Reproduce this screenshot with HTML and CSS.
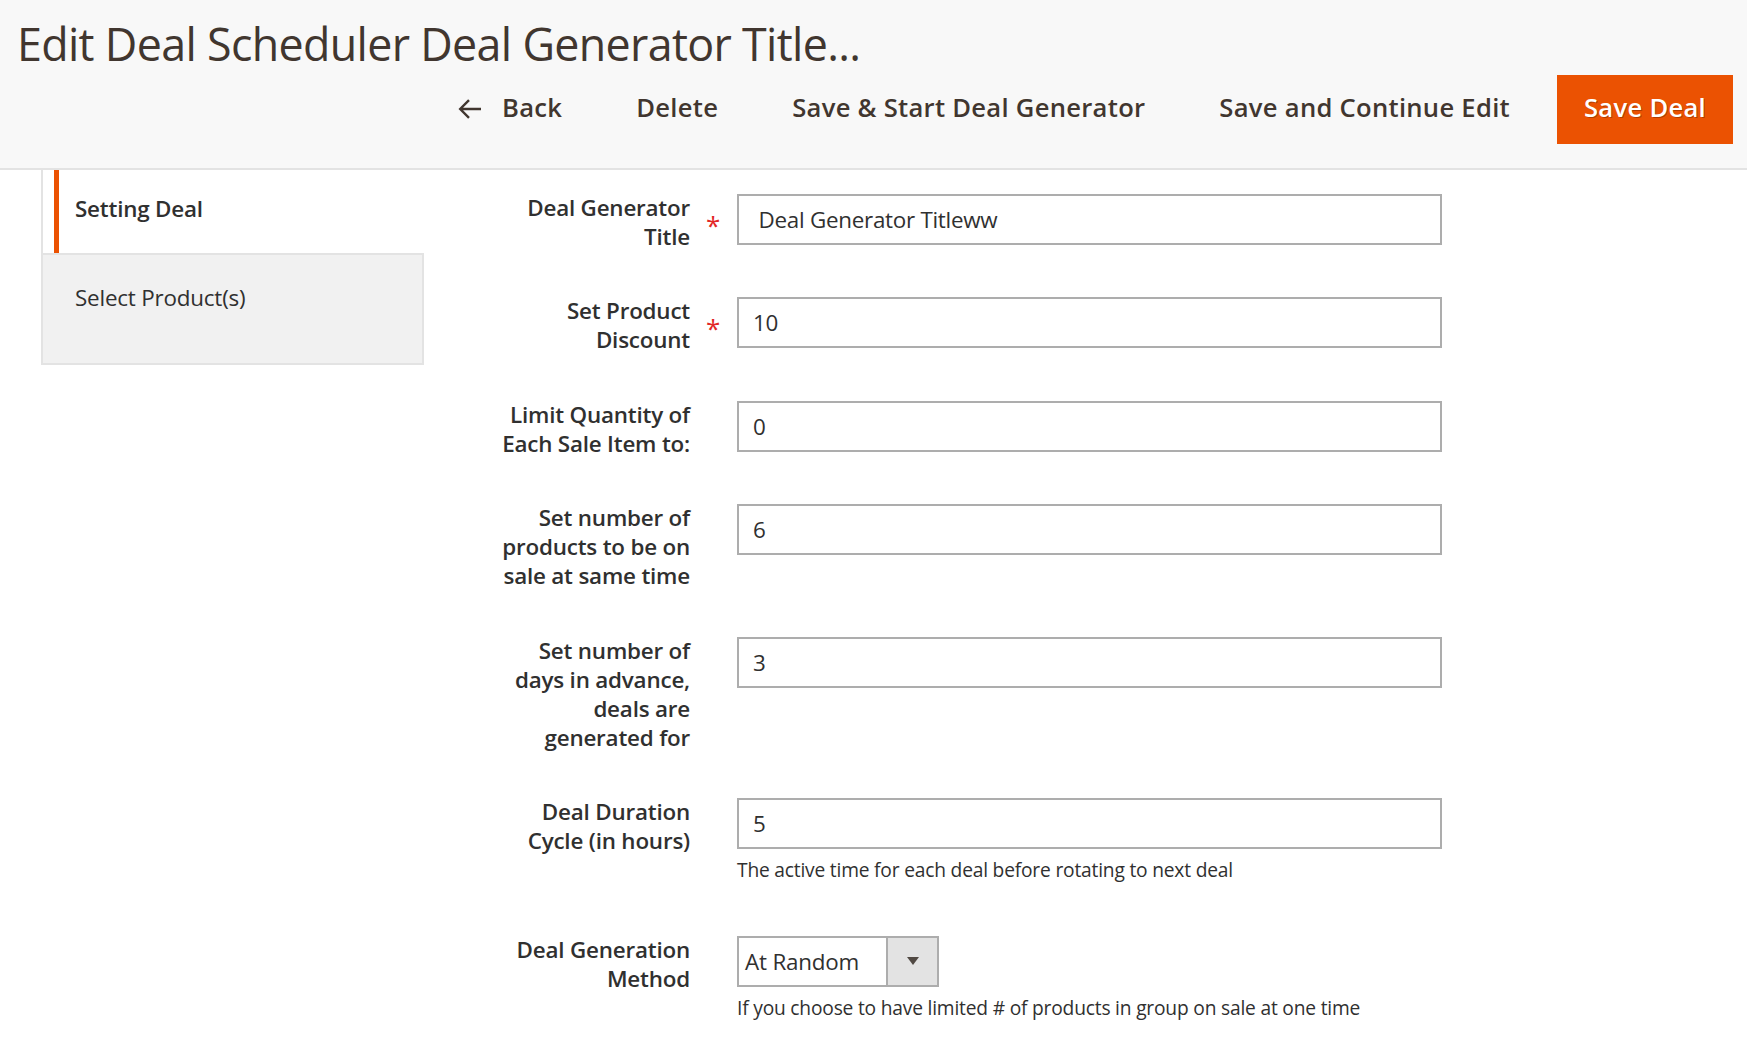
FILE: index.html
```html
<!DOCTYPE html>
<html lang="en">
<head>
<meta charset="utf-8">
<title>Edit Deal Scheduler Deal Generator</title>
<link rel="stylesheet" href="styles.css">
</head>
<body>
<header class="page-header">
  <h1 class="page-title">Edit Deal Scheduler Deal Generator Title...</h1>
  <div class="page-actions">
    <button class="action action-back" type="button">
      <svg class="back-icon" width="24" height="20" viewBox="0 0 24 20" aria-hidden="true"><path d="M23 10H2.5M11 1.2L2.2 10L11 18.8" fill="none" stroke="#41362f" stroke-width="2.4"/></svg>
      <span>Back</span>
    </button>
    <button class="action" type="button">Delete</button>
    <button class="action" type="button">Save &amp; Start Deal Generator</button>
    <button class="action" type="button">Save and Continue Edit</button>
    <button class="action action-primary" type="button">Save Deal</button>
  </div>
</header>

<main class="page-main">
  <nav class="tabs">
    <div class="tab tab-active">Setting Deal</div>
    <div class="tab tab-idle">Select Product(s)</div>
  </nav>

  <form class="form">
    <div class="field">
      <label class="field-label">Deal Generator Title</label>
      <span class="req">*</span>
      <div class="control"><input class="input" type="text" value=" Deal Generator Titleww"></div>
    </div>
    <div class="field">
      <label class="field-label">Set Product Discount</label>
      <span class="req">*</span>
      <div class="control"><input class="input" type="text" value="10"></div>
    </div>
    <div class="field">
      <label class="field-label">Limit Quantity of Each Sale Item to:</label>
      <span class="req"></span>
      <div class="control"><input class="input" type="text" value="0"></div>
    </div>
    <div class="field">
      <label class="field-label">Set number of products to be on sale at same time</label>
      <span class="req"></span>
      <div class="control"><input class="input" type="text" value="6"></div>
    </div>
    <div class="field">
      <label class="field-label">Set number of days in advance, deals are generated for</label>
      <span class="req"></span>
      <div class="control"><input class="input" type="text" value="3"></div>
    </div>
    <div class="field">
      <label class="field-label">Deal Duration Cycle (in hours)</label>
      <span class="req"></span>
      <div class="control">
        <input class="input" type="text" value="5">
        <div class="note note-gap">The active time for each deal before rotating to next deal</div>
      </div>
    </div>
    <div class="field">
      <label class="field-label">Deal Generation Method</label>
      <span class="req"></span>
      <div class="control">
        <div class="select">
          <span class="select-value">At Random</span>
          <span class="select-arrow"><svg width="12" height="8" viewBox="0 0 12 8" aria-hidden="true"><path d="M0 0H12L6 8Z" fill="#514943"/></svg></span>
        </div>
        <div class="note">If you choose to have limited # of products in group on sale at one time</div>
      </div>
    </div>
  </form>
</main>
</body>
</html>
```

FILE: styles.css
```css
html, body {
  margin: 0;
  padding: 0;
}

body {
  font-family: "Open Sans", "Liberation Sans", sans-serif;
  color: #303030;
  background: #ffffff;
  letter-spacing: -0.012em;
}

/* ---------- header ---------- */
.page-header {
  background: #f8f8f8;
  border-bottom: 2px solid #e3e3e3;
  padding: 17px 14px 24px 17px;
}

.page-title {
  margin: 0;
  font-size: 44.8px;
  line-height: 1.2;
  font-weight: 400;
  letter-spacing: -0.67px;
  color: #41362f;
  white-space: nowrap;
}

.page-actions {
  display: flex;
  justify-content: flex-end;
  gap: 22px;
  margin-top: 4px;
}

.action {
  box-sizing: border-box;
  height: 69px;
  padding: 0 26px 3px;
  display: inline-flex;
  align-items: center;
  border: 0;
  background: none;
  font-family: "Open Sans", "Liberation Sans", sans-serif;
  font-size: 25.6px;
  font-weight: 600;
  letter-spacing: 0.011em;
  color: #41362f;
  white-space: nowrap;
  cursor: pointer;
}

.action-back {
  gap: 20px;
}

.back-icon {
  display: block;
  margin-top: 3px;
}

.action-primary {
  margin-left: -1px;
  padding: 0 27px 3px;
  background: #eb5202;
  color: #ffffff;
  text-shadow: 1px 1px 0 rgba(0, 0, 0, 0.25);
}

/* ---------- body ---------- */
.page-main {
  display: flex;
  align-items: flex-start;
  gap: 66px;
  padding-left: 41px;
}

.tabs {
  flex: none;
  width: 383px;
  box-sizing: border-box;
  border-left: 2px solid #e3e3e3;
}

.tab {
  font-size: 22.4px;
  line-height: 1.36;
}

.tab-active {
  margin-left: 11px;
  border-left: 5px solid #eb5202;
  background: #ffffff;
  padding: 24px 16px 28.5px;
  font-weight: 600;
}

.tab-idle {
  background: #f1f1f1;
  border: 2px solid #e3e3e3;
  border-left: 0;
  padding: 28px 32px 49.5px;
  font-weight: 400;
}

/* ---------- form ---------- */
.form {
  display: flex;
  flex-direction: column;
  gap: 46.5px;
  padding-top: 24px;
}

.field {
  display: grid;
  grid-template-columns: 200px 47px 705px;
  align-items: start;
}

.field-label {
  text-align: right;
  font-size: 22.4px;
  line-height: 29px;
  font-weight: 600;
  color: #303030;
  margin-top: -1px;
}

.req {
  display: block;
  color: #e22626;
  font-size: 26px;
  line-height: 1;
  padding: 18px 0 0 16px;
}

.input {
  display: block;
  box-sizing: border-box;
  width: 705px;
  height: 51px;
  margin: 0;
  border: 2px solid #adadad;
  border-radius: 0;
  padding: 0 14px;
  background: #ffffff;
  font-family: "Open Sans", "Liberation Sans", sans-serif;
  font-size: 22.4px;
  letter-spacing: -0.012em;
  color: #303030;
  outline: none;
}

.note {
  font-size: 19.2px;
  line-height: 28.8px;
  margin-top: 7px;
  color: #303030;
  white-space: nowrap;
}

.note-gap {
  margin-bottom: 4px;
}

.select {
  display: flex;
  box-sizing: border-box;
  width: 202px;
  height: 51px;
  border: 2px solid #adadad;
  background: #ffffff;
}

.select-value {
  flex: 1;
  display: flex;
  align-items: center;
  padding-left: 6px;
  font-size: 22.4px;
  color: #303030;
}

.select-arrow {
  flex: none;
  width: 51px;
  box-sizing: border-box;
  border-left: 2px solid #adadad;
  background: #e3e3e3;
  display: flex;
  align-items: center;
  justify-content: center;
}

.select-arrow svg {
  display: block;
}
```
